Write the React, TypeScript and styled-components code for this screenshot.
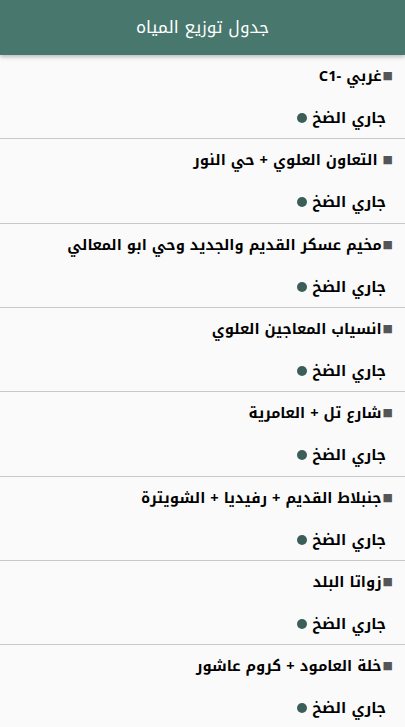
import React from "react";
import styled, { createGlobalStyle } from "styled-components";

const Global = createGlobalStyle`
  html, body { margin: 0; padding: 0; background: #fafafa; }
  body { font-family: "Noto Kufi Arabic", "Noto Sans Arabic", "Droid Arabic Kufi", "DejaVu Sans", sans-serif; overflow: hidden; }
  * { box-sizing: border-box; }
`;

const Page = styled.div`
  direction: rtl;
  width: 405px;
  min-height: 727px;
  background: #fafafa;
`;

const Header = styled.header`
  position: relative;
  z-index: 1;
  height: 55px;
  background: #47776d;
  display: flex;
  align-items: center;
  justify-content: center;
  box-shadow: 0 2px 4px rgba(0, 0, 0, 0.25);
`;

const Title = styled.h1`
  margin: 0;
  color: #ffffff;
  font-size: 17px;
  font-weight: normal;
  padding-bottom: 2px;
`;

const List = styled.ul`
  list-style: none;
  margin: 0;
  padding: 0;
`;

const Row = styled.li`
  height: 84.33px;
  border-bottom: 1.5px solid #c9c9c9;
  display: flex;
  flex-direction: column;
  align-items: flex-start;
  padding: 11px 12px 0 12px;
`;

const Name = styled.div`
  font-size: 14.7px;
  font-weight: bold;
  color: #000;
  line-height: 20px;
  display: flex;
  align-items: center;
`;

const Bullet = styled.span<{ $gap: boolean }>`
  color: #555;
  font-size: 11px;
  margin-left: ${(p) => (p.$gap ? "5px" : "1px")};
`;

const Status = styled.div`
  margin-top: 22px;
  margin-right: 7px;
  display: flex;
  align-items: center;
  gap: 5px;
  font-size: 15px;
  font-weight: bold;
  color: #000;
  line-height: 20px;
`;

const Dot = styled.span`
  width: 10px;
  height: 10px;
  border-radius: 50%;
  background: #3b5f58;
  display: inline-block;
`;

const items: { name: string; gap: boolean }[] = [
  { name: "غربي -C1", gap: false },
  { name: "التعاون العلوي + حي النور", gap: true },
  { name: "مخيم عسكر القديم والجديد وحي ابو المعالي", gap: false },
  { name: "انسياب المعاجين العلوي", gap: false },
  { name: "شارع تل + العامرية", gap: false },
  { name: "جنبلاط القديم + رفيديا + الشويترة", gap: false },
  { name: "زواتا البلد", gap: false },
  { name: "خلة العامود + كروم عاشور", gap: false },
];

export default function App() {
  return (
    <Page>
      <Global />
      <Header>
        <Title>جدول توزيع المياه</Title>
      </Header>
      <List>
        {items.map((it, i) => (
          <Row key={i}>
            <Name>
              <Bullet $gap={it.gap}>■</Bullet>
              <span>{it.name}</span>
            </Name>
            <Status>
              <span>جاري الضخ</span>
              <Dot />
            </Status>
          </Row>
        ))}
      </List>
    </Page>
  );
}
